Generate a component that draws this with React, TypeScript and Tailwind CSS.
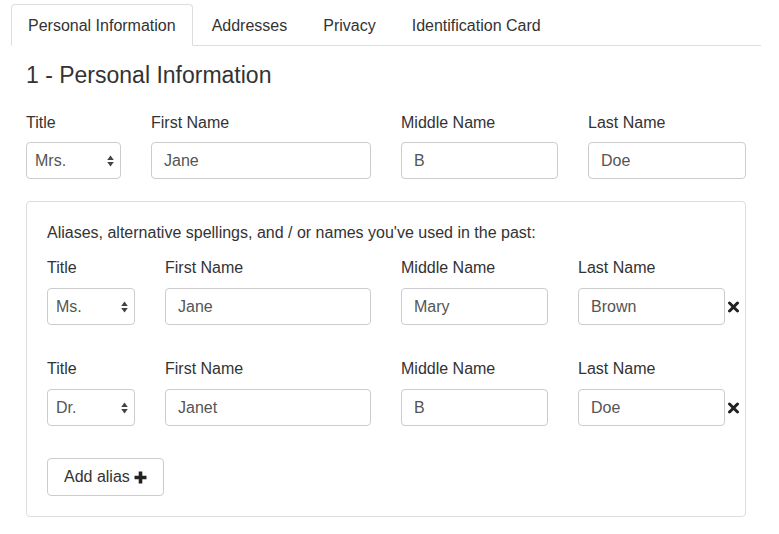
import React from 'react';

const FONT = { fontFamily: '"Liberation Sans", Arial, Helvetica, sans-serif' };

const TABS = ['Personal Information', 'Addresses', 'Privacy', 'Identification Card'];

type NameRow = { title: string; first: string; middle: string; last: string };

const ALIASES: NameRow[] = [
  { title: 'Ms.', first: 'Jane', middle: 'Mary', last: 'Brown' },
  { title: 'Dr.', first: 'Janet', middle: 'B', last: 'Doe' },
];

function SelectArrows() {
  return (
    <svg width="7" height="12" viewBox="0 0 7 12" className="absolute right-[6px] top-1/2 -translate-y-1/2">
      <path d="M3.5 0.5 L6.8 5 L0.2 5 Z" fill="#444" />
      <path d="M3.5 11.5 L6.8 7 L0.2 7 Z" fill="#444" />
    </svg>
  );
}

function FakeSelect({ value, width }: { value: string; width: string }) {
  return (
    <div className={`relative h-[37px] ${width} rounded-[4px] border border-[#ccc] bg-white pl-[8px] flex items-center text-[16px] text-[#555]`}>
      {value}
      <SelectArrows />
    </div>
  );
}

function TextBox({ value, width }: { value: string; width: string }) {
  return (
    <input
      readOnly
      value={value}
      style={FONT}
      className={`h-[37px] ${width} rounded-[4px] border border-[#ccc] bg-white px-[12px] text-[16px] text-[#555] outline-none`}
    />
  );
}

function Label({ children, mb }: { children: React.ReactNode; mb: string }) {
  return <div className={`text-[16px] leading-[22px] text-[#333] ${mb}`}>{children}</div>;
}

function RemoveIcon() {
  return (
    <svg width="11" height="11" viewBox="0 0 11 11" className="absolute left-full top-1/2 ml-[3px] -translate-y-1/2">
      <path d="M1.5 1.5 L9.5 9.5 M9.5 1.5 L1.5 9.5" stroke="#222" strokeWidth="3" strokeLinecap="square" />
    </svg>
  );
}

function PlusIcon() {
  return (
    <svg width="13" height="13" viewBox="0 0 13 13" className="ml-[4px]">
      <path d="M6.5 0.5 V12.5 M0.5 6.5 H12.5" stroke="#222" strokeWidth="3.6" />
    </svg>
  );
}

export default function App() {
  return (
    <div style={FONT} className="min-h-screen bg-white text-[#333]">
      <div className="ml-[11px] w-[750px] pt-[4px]">
        {/* Tabs */}
        <ul className="flex border-b border-[#ddd]">
          {TABS.map((t, i) => (
            <li
              key={t}
              className={`-mb-px mr-[2px] rounded-t-[4px] border px-[16px] pt-[10px] pb-[8px] text-[16px] leading-[22px] text-[#333] ${
                i === 0 ? 'border-[#ddd] border-b-white bg-white' : 'border-transparent'
              }`}
            >
              {t}
            </li>
          ))}
        </ul>

        <div className="px-[15px]">
          <h2 className="mt-[16px] text-[23px] leading-[26px] text-[#333]">1 - Personal Information</h2>

          {/* Main name */}
          <div className="mt-[24px] flex gap-[30px]">
            <div>
              <Label mb="mb-[8px]">Title</Label>
              <FakeSelect value="Mrs." width="w-[95px]" />
            </div>
            <div>
              <Label mb="mb-[8px]">First Name</Label>
              <TextBox value="Jane" width="w-[220px]" />
            </div>
            <div>
              <Label mb="mb-[8px]">Middle Name</Label>
              <TextBox value="B" width="w-[157px]" />
            </div>
            <div>
              <Label mb="mb-[8px]">Last Name</Label>
              <TextBox value="Doe" width="w-[158px]" />
            </div>
          </div>

          {/* Aliases panel */}
          <div className="mt-[22px] rounded-[4px] border border-[#ddd] px-[20px] pt-[20px] pb-[20px]">
            <p className="mb-[13px] text-[16px] leading-[22px] text-[#333]">
              Aliases, alternative spellings, and / or names you've used in the past:
            </p>

            {ALIASES.map((a, i) => (
              <div key={i} className={`flex gap-[30px] ${i > 0 ? 'mt-[33px]' : ''}`}>
                <div>
                  <Label mb="mb-[9px]">Title</Label>
                  <FakeSelect value={a.title} width="w-[88px]" />
                </div>
                <div>
                  <Label mb="mb-[9px]">First Name</Label>
                  <TextBox value={a.first} width="w-[206px]" />
                </div>
                <div>
                  <Label mb="mb-[9px]">Middle Name</Label>
                  <TextBox value={a.middle} width="w-[147px]" />
                </div>
                <div>
                  <Label mb="mb-[9px]">Last Name</Label>
                  <div className="relative">
                    <TextBox value={a.last} width="w-[147px]" />
                    <RemoveIcon />
                  </div>
                </div>
              </div>
            ))}

            <button
              style={FONT}
              className="mt-[32px] flex h-[38px] items-center rounded-[4px] border border-[#ccc] bg-white px-[16px] text-[16px] text-[#333]"
            >
              Add alias
              <PlusIcon />
            </button>
          </div>
        </div>
      </div>
    </div>
  );
}
